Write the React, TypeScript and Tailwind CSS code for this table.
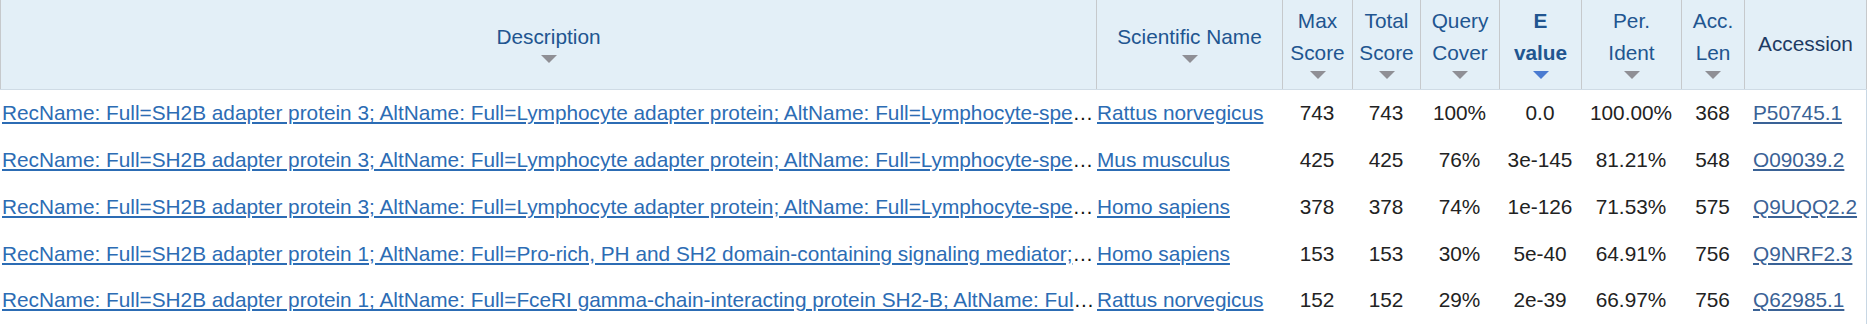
import React from "react";

interface Hit {
  desc: string;
  sci: string;
  max: string;
  total: string;
  cover: string;
  evalue: string;
  ident: string;
  len: string;
  acc: string;
}

const LNK =
  "RecName: Full=SH2B adapter protein 3; AltName: Full=Lymphocyte adapter protein; AltName: Full=Lymphocyte-specific adapter protein Lnk; AltName: Full=Signal transduction protein Lnk";

const hits: Hit[] = [
  { desc: LNK, sci: "Rattus norvegicus", max: "743", total: "743", cover: "100%", evalue: "0.0", ident: "100.00%", len: "368", acc: "P50745.1" },
  { desc: LNK, sci: "Mus musculus", max: "425", total: "425", cover: "76%", evalue: "3e-145", ident: "81.21%", len: "548", acc: "O09039.2" },
  { desc: LNK, sci: "Homo sapiens", max: "378", total: "378", cover: "74%", evalue: "1e-126", ident: "71.53%", len: "575", acc: "Q9UQQ2.2" },
  {
    desc: "RecName: Full=SH2B adapter protein 1; AltName: Full=Pro-rich, PH and SH2 domain-containing signaling mediator; Short=PSM; AltName: Full=SH2 domain-containing protein 1B",
    sci: "Homo sapiens", max: "153", total: "153", cover: "30%", evalue: "5e-40", ident: "64.91%", len: "756", acc: "Q9NRF2.3",
  },
  {
    desc: "RecName: Full=SH2B adapter protein 1; AltName: Full=FceRI gamma-chain-interacting protein SH2-B; AltName: Full=SH2 domain-containing protein 1B",
    sci: "Rattus norvegicus", max: "152", total: "152", cover: "29%", evalue: "2e-39", ident: "66.97%", len: "756", acc: "Q62985.1",
  },
];

const grid = "grid grid-cols-[1096px_186px_70px_68px_79px_82px_100px_63px_123px]";

const SortArrow = ({ active }: { active?: boolean }) => (
  <svg width="16" height="8" viewBox="0 0 16 8" className="mt-[2px] mb-[3px]">
    <path d="M0 0h16L8 8z" fill={active ? "#4a7bd1" : "#8f8f95"} />
  </svg>
);

const HeadCell = ({ lines, active, sortable = true, last }: { lines: string[]; active?: boolean; sortable?: boolean; last?: boolean }) => (
  <div
    className={`flex h-full flex-col items-center justify-center pb-[2px] border-l border-[#c6c9cc] text-center leading-[32px] ${
      last ? "border-r text-[#1d3a63]" : "text-[#215590]"
    } ${active ? "font-bold text-[#1d4c84]" : ""}`}
  >
    {lines.map((l) => (
      <span key={l} className="whitespace-nowrap">
        {l}
      </span>
    ))}
    {sortable && <SortArrow active={active} />}
  </div>
);

const Num = ({ children }: { children: React.ReactNode }) => (
  <div className="text-center text-[#222]">{children}</div>
);

export default function App() {
  return (
    <div className="w-[1867px] bg-white font-['Liberation_Sans',Arial,sans-serif] text-[20.8px]">
      <div className={`${grid} h-[90px] border-b border-[#cfdbe5] bg-[#e3eff7]`}>
        <HeadCell lines={["Description"]} />
        <HeadCell lines={["Scientific Name"]} />
        <HeadCell lines={["Max", "Score"]} />
        <HeadCell lines={["Total", "Score"]} />
        <HeadCell lines={["Query", "Cover"]} />
        <HeadCell lines={["E", "value"]} active />
        <HeadCell lines={["Per.", "Ident"]} />
        <HeadCell lines={["Acc.", "Len"]} />
        <HeadCell lines={["Accession"]} sortable={false} last />
      </div>
      <div className="border-r border-[#c8d7e4]">
        {hits.map((h) => (
          <div key={h.acc} className={`${grid} h-[46.75px] items-center leading-[32px]`}>
            <div className="overflow-hidden text-ellipsis whitespace-nowrap pl-[2px] pr-[1px] text-[#111]">
              <a href="#" className="text-[#2c6cb4] underline">
                {h.desc}
              </a>
            </div>
            <div className="overflow-hidden whitespace-nowrap pl-[1px]">
              <a href="#" className="text-[#2c6cb4] underline">
                {h.sci}
              </a>
            </div>
            <Num>{h.max}</Num>
            <Num>{h.total}</Num>
            <Num>{h.cover}</Num>
            <Num>{h.evalue}</Num>
            <Num>{h.ident}</Num>
            <Num>{h.len}</Num>
            <div className="pl-[9px]">
              <a href="#" className="text-[#3a6296] underline">
                {h.acc}
              </a>
            </div>
          </div>
        ))}
      </div>
    </div>
  );
}
